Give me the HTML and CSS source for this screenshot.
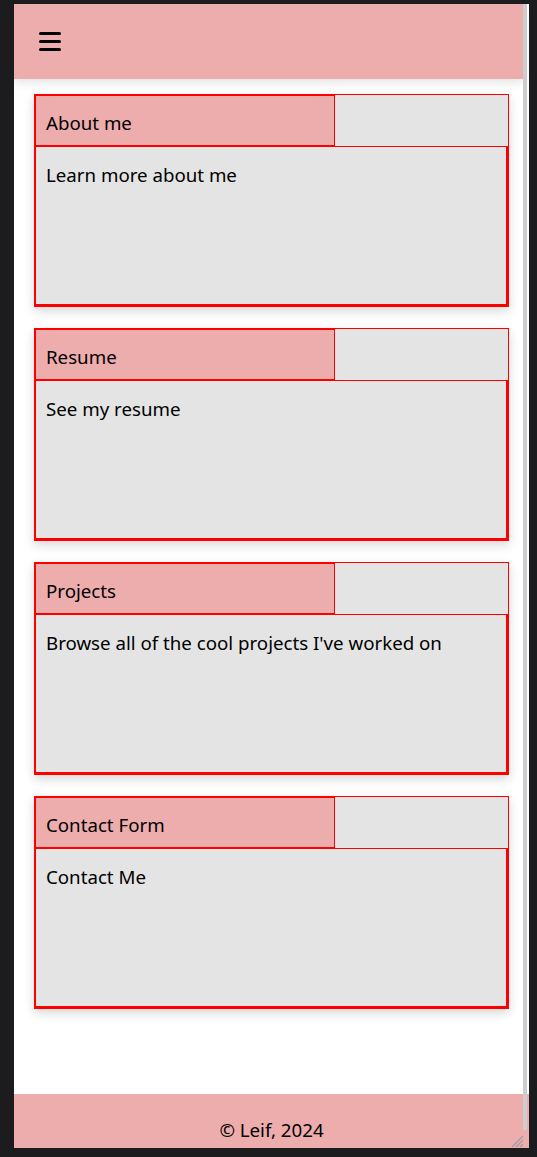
FILE: index.html
```html
<!DOCTYPE html>
<html lang="en">
<head>
<meta charset="utf-8">
<title>Leif</title>
<link rel="stylesheet" href="styles.css">
</head>
<body>
<div class="frame">
  <header class="topbar">
    <svg class="burger" width="22" height="19" viewBox="0 0 22 19" aria-label="menu">
      <line x1="1.5" y1="1.5" x2="20.5" y2="1.5"/>
      <line x1="1.5" y1="9.5" x2="20.5" y2="9.5"/>
      <line x1="1.5" y1="17.5" x2="20.5" y2="17.5"/>
    </svg>
  </header>
  <main class="cards">
    <section class="card">
      <div class="card-head"><div class="tab">About me</div><div class="filler"></div></div>
      <div class="card-body">Learn more about me</div>
    </section>
    <section class="card">
      <div class="card-head"><div class="tab">Resume</div><div class="filler"></div></div>
      <div class="card-body">See my resume</div>
    </section>
    <section class="card">
      <div class="card-head"><div class="tab">Projects</div><div class="filler"></div></div>
      <div class="card-body">Browse all of the cool projects I've worked on</div>
    </section>
    <section class="card">
      <div class="card-head"><div class="tab">Contact Form</div><div class="filler"></div></div>
      <div class="card-body">Contact Me</div>
    </section>
  </main>
  <footer class="footer">© Leif, 2024</footer>
  <div class="scrollbar"></div>
  <svg class="grip" width="12" height="14" viewBox="0 0 12 14">
    <line x1="1" y1="14" x2="12" y2="3"/>
    <line x1="5" y1="14" x2="12" y2="7"/>
    <line x1="9" y1="14" x2="12" y2="11"/>
  </svg>
</div>
</body>
</html>
```
FILE: styles.css
```css
html, body {
  margin: 0;
}
body {
  background: #1c1c1e;
  padding: 4px 8px 9px 14px;
  font-family: "Noto Sans", "Open Sans", sans-serif;
  color: #000;
}
.frame {
  position: relative;
  width: 515px;
  height: 1144px;
  background: #fff;
  display: flex;
  flex-direction: column;
  overflow: hidden;
}
.topbar {
  box-sizing: border-box;
  width: 509px;
  height: 75px;
  flex: none;
  background: #edadad;
  display: flex;
  align-items: center;
  padding-left: 25px;
  box-shadow: 0 3px 10px rgba(0, 0, 0, 0.12);
  position: relative;
  z-index: 1;
}
.burger line {
  stroke: #000;
  stroke-width: 3;
  stroke-linecap: round;
}
.cards {
  flex: 1;
  display: flex;
  flex-direction: column;
  gap: 21px;
  padding: 15px 20px 0;
}
.card {
  height: 213px;
  display: flex;
  flex-direction: column;
  background: #e4e4e4;
  box-shadow: 0 4px 10px rgba(0, 0, 0, 0.16);
}
.card-head {
  display: flex;
  height: 53px;
  flex: none;
}
.tab {
  box-sizing: border-box;
  width: 301px;
  height: 53px;
  background: #edadad;
  border: 2px solid #ff0000;
  border-right-width: 1px;
  padding: 14px 0 0 10px;
  font-size: 18.7px;
  line-height: 26px;
}
.filler {
  flex: 1;
  height: 53px;
  box-sizing: border-box;
  border: 1px solid #ff0000;
  border-left: none;
}
.card-body {
  flex: 1;
  box-sizing: border-box;
  border: 3px solid #ff0000;
  border-top: none;
  border-left-width: 2px;
  padding: 15px 0 0 10px;
  font-size: 18.7px;
  line-height: 26px;
}
.footer {
  flex: none;
  height: 54px;
  box-sizing: border-box;
  background: #edadad;
  text-align: center;
  padding-top: 23px;
  font-size: 18.7px;
  line-height: 26px;
}
.scrollbar {
  position: absolute;
  top: 0;
  right: 2px;
  width: 4px;
  height: 1126px;
  background: #cdcdcd;
  z-index: 2;
}
.grip {
  position: absolute;
  right: 6px;
  bottom: 1px;
  z-index: 2;
}
.grip line {
  stroke: #a0a0a0;
  stroke-width: 1.5;
}
```
